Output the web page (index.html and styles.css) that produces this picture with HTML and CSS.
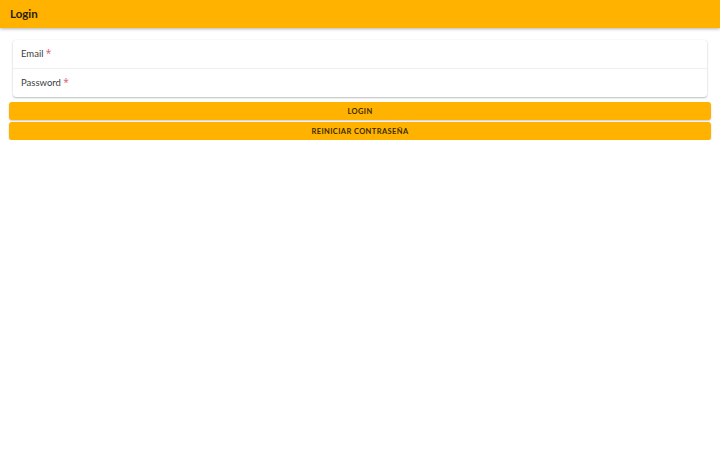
FILE: index.html
```html
<!DOCTYPE HTML>
<html>
<head>
<meta charset="utf-8" />
<title>Login</title>
<link rel="stylesheet" href="styles.css">
</head>
<body>
<div class="toolbar">Login</div>
<div class="content">
	<div class="list">
		<div class="item">Email <span class="req">*</span></div>
		<div class="item">Password <span class="req">*</span></div>
	</div>
	<button class="btn">Login</button>
	<button class="btn">Reiniciar contraseña</button>
</div>
</body>
</html>
```

FILE: styles.css
```css
body { margin: 0; background: #fff; font-family: Lato, "Open Sans", sans-serif; color: #333; }

.toolbar {
	height: 28px;
	line-height: 28px;
	padding: 0 10px;
	background: #ffb300;
	color: #2a2000;
	font-size: 11.5px;
	font-weight: 700;
	box-shadow: 0 1px 3px rgba(0,0,0,.3);
}

.content { padding: 12px 9px 0; display: flex; flex-direction: column; gap: 2px; }
	.list {
		margin: 0 4px 3px;
		background: #fff;
		border-radius: 3px;
		box-shadow: 0 1px 2px rgba(0,0,0,.25), 0 0 1px rgba(0,0,0,.12);
	}
		.item {
			height: 28px;
			line-height: 28px;
			padding: 0 8px;
			font-size: 9.5px;
			color: #3c3c3c;
		}
		.item + .item { border-top: 1px solid #eee; }
		.req { color: #d9576b; font-size: 10px; line-height: 0; font-family: "Open Sans", sans-serif; }

.btn {
	height: 18px;
	border: 0;
	border-radius: 3px;
	background: #ffb300;
	color: #3a2a00;
	font-family: inherit;
	font-size: 7.5px;
	font-weight: 700;
	letter-spacing: .4px;
	text-transform: uppercase;
	box-shadow: 0 1px 2px rgba(0,0,0,.2);
	padding: 0;
}
```
